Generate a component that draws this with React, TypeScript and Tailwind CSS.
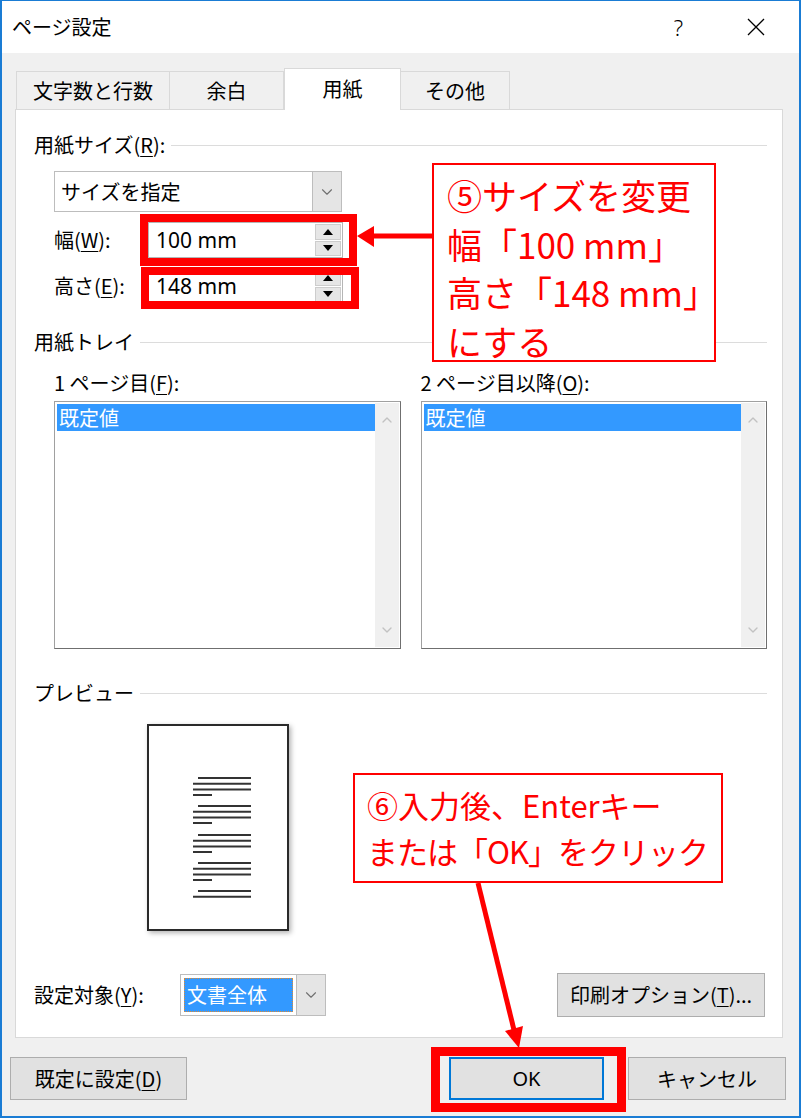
import type { ReactNode } from 'react'
import { ChevronDown, ChevronUp } from 'lucide-react'

const jp = "font-['Noto_Sans_CJK_JP','Noto_Sans',sans-serif]"

function U({ children }: { children: ReactNode }) {
  return <span className="underline decoration-1 underline-offset-[3px]">{children}</span>
}

function SectionHeader({ children }: { children: ReactNode }) {
  return (
    <div className="flex h-[26px] items-center pl-[18px] pr-[15px]">
      <span className="text-[20px] leading-[26px]">{children}</span>
      <div className="ml-[6px] h-px flex-1 bg-[#dcdcdc]" />
    </div>
  )
}

function Tab({ label, width, active }: { label: string; width: string; active?: boolean }) {
  return (
    <div
      className={
        active
          ? `relative z-10 flex h-[42px] items-center justify-center border border-b-0 border-[#d9d9d9] bg-white pb-[2px] text-[20px] ${width}`
          : `flex h-[39px] items-center justify-center border border-b-0 border-l-0 border-[#d9d9d9] bg-[#f0f0f0] text-[20px] first:border-l ${width}`
      }
    >
      {label}
    </div>
  )
}

function Spinner() {
  return (
    <div className="flex w-[26px] flex-col gap-px">
      <div className="flex h-[16px] items-center justify-center border border-[#cdcdcd] bg-[#e6e6e6]">
        <svg width="10" height="6" viewBox="0 0 10 6">
          <polygon points="5,0 10,6 0,6" fill="#000" />
        </svg>
      </div>
      <div className="flex h-[16px] items-center justify-center border border-[#cdcdcd] bg-[#e6e6e6]">
        <svg width="10" height="6" viewBox="0 0 10 6">
          <polygon points="0,0 10,0 5,6" fill="#000" />
        </svg>
      </div>
    </div>
  )
}

function SpinRow({ label, value }: { label: ReactNode; value: string }) {
  return (
    <div className="ml-[38px] flex h-[36px] items-center">
      <span className="w-[94px] text-[20px]">{label}</span>
      <div className="flex h-full w-[195px] border border-[#b5b5b5] bg-white p-px">
        <div className="flex-1 pl-[6px] font-['Noto_Sans',sans-serif] text-[21px] leading-[32px]">{value}</div>
        <Spinner />
      </div>
    </div>
  )
}

function ListBox() {
  return (
    <div className="flex h-[248px] border border-[#a0a0a0] border-b-[#6f6f6f] border-r-[#6f6f6f] bg-white p-px">
      <div className="flex-1 pt-px pl-px">
        <div className="h-[27px] bg-[#3399ff] pl-[2px] text-[20px] leading-[27px] text-white">既定値</div>
      </div>
      <div className="flex w-[24px] flex-col items-center justify-between bg-[#f0f0f0] py-[9px]">
        <ChevronUp className="h-[16px] w-[16px] text-[#c2c2c2]" strokeWidth={2} />
        <ChevronDown className="h-[16px] w-[16px] text-[#c2c2c2]" strokeWidth={2} />
      </div>
    </div>
  )
}

function PagePreview() {
  const groups = [50, 78, 107, 135, 163]
  return (
    <div className="ml-[131px] mt-[18px] h-[207px] w-[142px] border-2 border-[#2a2a2a] bg-white shadow-[2px_2px_5px_rgba(0,0,0,0.3)]">
      <svg width="138" height="203" viewBox="-2 -2 138 203">
        {groups.map((g, i) => (
          <g key={g} stroke="#333" strokeWidth="2">
            <line x1="47" y1={g} x2="100" y2={g} />
            <line x1="42" y1={g + 5.7} x2="100" y2={g + 5.7} />
            {i < 4 && <line x1="42" y1={g + 11.4} x2="100" y2={g + 11.4} />}
            {i < 4 && <line x1="42" y1={g + 17} x2="61" y2={g + 17} />}
          </g>
        ))}
      </svg>
    </div>
  )
}

function Button({ children, width, primary }: { children: ReactNode; width: string; primary?: boolean }) {
  return (
    <div
      className={`flex h-[43px] items-center justify-center bg-[#e1e1e1] text-[20px] ${width} ${
        primary ? 'border-2 border-[#0078d7]' : 'border border-[#adadad]'
      }`}
    >
      {children}
    </div>
  )
}

export default function App() {
  return (
    <div className={`relative h-[1118px] w-[801px] overflow-hidden text-black ${jp}`}>
      <div className="flex h-full flex-col border-x-2 border-b-2 border-t border-[#1a7cd4] bg-[#f0f0f0]">
        {/* title bar */}
        <div className="flex h-[52px] items-center bg-white pl-[10px]">
          <span className="text-[20px]">ページ設定</span>
          <span className="ml-auto mr-[64px] font-['Noto_Sans',sans-serif] text-[22px] font-light">?</span>
          <svg width="18" height="18" viewBox="0 0 18 18" className="mr-[34px]">
            <path d="M1 1 L17 17 M17 1 L1 17" stroke="#000" strokeWidth="1.3" />
          </svg>
        </div>

        {/* tabs */}
        <div className="mt-[15px] flex h-[42px] items-end pl-[14px]">
          <Tab label="文字数と行数" width="w-[154px]" />
          <Tab label="余白" width="w-[114px]" />
          <Tab label="用紙" width="w-[117px]" active />
          <Tab label="その他" width="w-[109px] border-l-0" />
        </div>

        {/* panel */}
        <div className="-mt-px ml-[13px] mr-[16px] flex h-[929px] flex-col border border-[#d9d9d9] bg-white pt-[22px]">
          <SectionHeader>
            用紙サイズ(<U>R</U>):
          </SectionHeader>

          <div className="ml-[38px] mt-[13px] flex h-[41px] w-[288px] border border-[#bdbdbd] bg-white">
            <div className="flex-1 pl-[6px] text-[20px] leading-[39px]">サイズを指定</div>
            <div className="flex w-[29px] items-center justify-center border-l border-[#bdbdbd] bg-[#e5e5e5]">
              <ChevronDown className="h-[18px] w-[18px] text-[#707070]" strokeWidth={1.5} />
            </div>
          </div>

          <div className="mt-[10px]">
            <SpinRow
              label={
                <>
                  幅(<U>W</U>):
                </>
              }
              value="100 mm"
            />
          </div>
          <div className="mt-[10px]">
            <SpinRow
              label={
                <>
                  高さ(<U>E</U>):
                </>
              }
              value="148 mm"
            />
          </div>

          <div className="mt-[25px]">
            <SectionHeader>用紙トレイ</SectionHeader>
          </div>

          <div className="ml-[38px] mr-[15px] mt-[15px] flex gap-[20px]">
            <div className="flex flex-1 flex-col gap-[5px]">
              <span className="h-[26px] text-[20px] leading-[26px]">
                1 ページ目(<U>F</U>):
              </span>
              <ListBox />
            </div>
            <div className="flex flex-1 flex-col gap-[5px]">
              <span className="h-[26px] text-[20px] leading-[26px]">
                2 ページ目以降(<U>O</U>):
              </span>
              <ListBox />
            </div>
          </div>

          <div className="mt-[31px]">
            <SectionHeader>プレビュー</SectionHeader>
          </div>

          <PagePreview />

          <div className="mt-[42px] flex h-[44px] items-center pl-[18px] pr-[17px]">
            <span className="w-[146px] text-[20px]">
              設定対象(<U>Y</U>):
            </span>
            <div className="flex h-[42px] w-[146px] border border-[#bdbdbd] bg-white p-[3px] pr-0">
              <div className="flex-1 border border-dotted border-[#e08a30] bg-[#3399ff] pl-[2px] text-[20px] leading-[32px] text-white">
                文書全体
              </div>
              <div className="ml-[3px] -my-[3px] flex w-[29px] items-center justify-center border-l border-[#bdbdbd] bg-[#e5e5e5]">
                <ChevronDown className="h-[18px] w-[18px] text-[#707070]" strokeWidth={1.5} />
              </div>
            </div>
            <div className="ml-auto flex h-[44px] w-[208px] items-center justify-center border border-[#adadad] bg-[#e1e1e1] text-[20px]">
              印刷オプション(<U>T</U>)...
            </div>
          </div>
        </div>

        {/* bottom buttons */}
        <div className="ml-[8px] mr-[13px] mt-[19px] flex">
          <Button width="w-[177px]">
            既定に設定(<U>D</U>)
          </Button>
          <div className="ml-auto flex gap-[24px]">
            <Button width="w-[155px]" primary>
              <span className="font-['Noto_Sans',sans-serif]">OK</span>
            </Button>
            <Button width="w-[158px]">キャンセル</Button>
          </div>
        </div>
      </div>

      {/* annotations */}
      <div className="absolute left-[140px] top-[214px] h-[52px] w-[217px] border-[8px] border-[#ff0000]" />
      <div className="absolute left-[141px] top-[267px] h-[42px] w-[218px] border-[8px] border-[#ff0000]" />
      <div className="absolute left-[431px] top-[1047px] h-[65px] w-[195px] border-[9px] border-[#ff0000]" />

      <svg className="pointer-events-none absolute inset-0" width="801" height="1118">
        <line x1="433" y1="236" x2="370" y2="236" stroke="#ff0000" strokeWidth="5" />
        <polygon points="357,236 374,226 374,247" fill="#ff0000" />
        <line x1="478" y1="883" x2="514" y2="1030" stroke="#ff0000" strokeWidth="5" />
        <polygon points="519,1048 523,1026 505,1031" fill="#ff0000" />
      </svg>

      <div className="absolute left-[432px] top-[163px] h-[199px] w-[284px] border-2 border-[#ff0000] bg-white pl-[13px] pt-[6px] text-[35px] leading-[48.5px] text-[#ff0000]">
        <div>⑤サイズを変更</div>
        <div>幅「100 mm」</div>
        <div>高さ「148 mm」</div>
        <div>にする</div>
      </div>

      <div className="absolute left-[353px] top-[773px] h-[110px] w-[370px] border-2 border-[#ff0000] bg-white pl-[12px] pt-[7px] text-[31px] leading-[46px] text-[#ff0000]">
        <div>⑥入力後、Enterキー</div>
        <div className="tracking-[-1px]">または「OK」をクリック</div>
      </div>
    </div>
  )
}
